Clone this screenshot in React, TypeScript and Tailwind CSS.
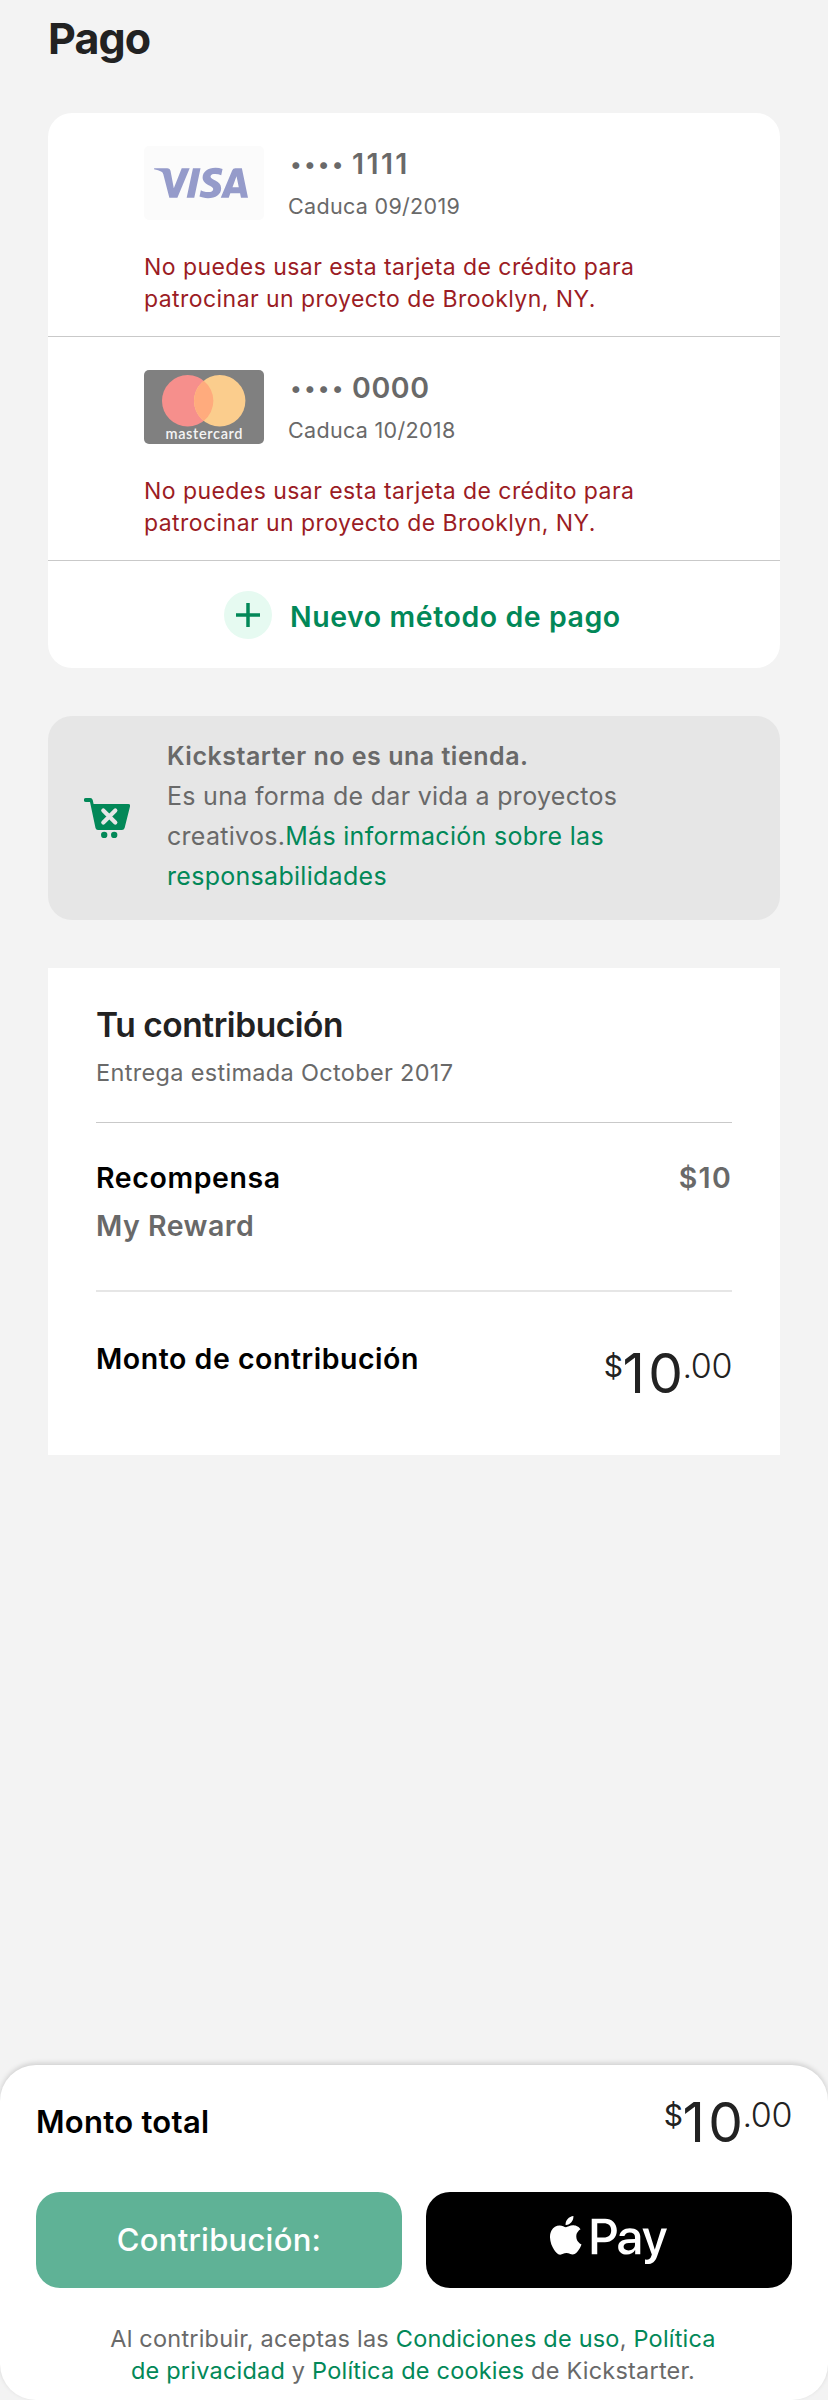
import type { ReactNode } from "react";
import { FaApplePay } from "react-icons/fa";
import { SiVisa } from "react-icons/si";

function VisaLogo() {
  return (
    <div className="flex h-[74px] w-[120px] shrink-0 items-center justify-center rounded-[5px] bg-[#fbfbfb]">
      <SiVisa className="size-[94px] -translate-x-[3px] text-[#959bca]" />
    </div>
  );
}

function MastercardLogo() {
  return (
    <svg viewBox="0 0 120 74" className="h-[74px] w-[120px] shrink-0">
      <rect width="120" height="74" rx="5" fill="#808080" />
      <circle cx="43.7" cy="30.8" r="25.7" fill="#f68f8c" />
      <circle cx="75.7" cy="30.8" r="25.7" fill="#fbcd8d" />
      <path d="M59.7 10.7a25.7 25.7 0 0 1 0 40.2a25.7 25.7 0 0 1 0-40.2z" fill="#ffab7d" />
      <text
        x="21.5"
        y="69"
        textLength="77"
        lengthAdjust="spacing"
        fill="#f4f4f4"
        fontFamily="Lato, sans-serif"
        fontWeight="600"
        fontSize="14.5"
      >
        mastercard
      </text>
    </svg>
  );
}

function CardRow({ logo, digits, expiry }: { logo: ReactNode; digits: ReactNode; expiry: string }) {
  return (
    <div className="h-[224px] border-b border-[#c9c9c9] pt-[33px] pl-24">
      <div className="flex">
        {logo}
        <div className="pl-6 text-[#696969]">
          <div className="mt-px flex h-[34px] items-baseline pl-[2px] text-[28.5px] leading-[34px] font-semibold">
            <span className="w-[60px] -translate-y-[2px] text-[22px] font-medium tracking-[2.2px]">••••</span>
            {digits}
          </div>
          <div className="mt-[11px] text-[21.5px] leading-7 tracking-[0.32px]">{expiry}</div>
        </div>
      </div>
      <p className="mt-[31px] text-[23px] leading-8 tracking-[0.44px] text-[#9b1c24]">
        No puedes usar esta tarjeta de crédito para
        <br />
        patrocinar un proyecto de Brooklyn, NY.
      </p>
    </div>
  );
}

function CartIcon() {
  return (
    <svg viewBox="0 0 46 40" className="h-10 w-[46px] shrink-0" fill="#028858">
      <path d="M1.8 0H6.3Q8.2 0 8.7 2L9.6 6H44.2Q46.6 6 46 8.4L40.6 30Q40 32 38 32H14Q12 32 11.5 30L6 4H1.8A2 2 0 0 1 1.8 0Z" />
      <circle cx="20.2" cy="37" r="3.2" />
      <circle cx="30.2" cy="37" r="3.2" />
      <path d="M19.3 12.6 31.3 24.6M31.3 12.6 19.3 24.6" stroke="#e6e6e6" strokeWidth="4.2" strokeLinecap="round" />
    </svg>
  );
}

function Amount() {
  return (
    <div className="flex text-[#222222]">
      <span className="text-[30px] leading-[43px] tracking-[-0.5px]">$</span>
      <span className="-mr-[3.6px] text-[55px] leading-[56px] tracking-[3.2px]">10</span>
      <span className="text-[34px] leading-[42px] font-[350] tracking-[-0.4px]">.00</span>
    </div>
  );
}

export default function App() {
  return (
    <div className="flex h-[2400px] w-[828px] flex-col bg-[#f3f3f3] font-[Inter,sans-serif]">
      <main className="grow px-12 pt-3">
        <h1 className="text-[43px] leading-[52px] font-bold tracking-[-0.9px] text-[#222222]">Pago</h1>

        <section className="mt-[49px] h-[555px] overflow-hidden rounded-3xl bg-white">
          <CardRow
            logo={<VisaLogo />}
            digits={<span className="pl-[2px] tracking-[2.4px]">1111</span>}
            expiry="Caduca 09/2019"
          />
          <CardRow
            logo={<MastercardLogo />}
            digits={<span className="pl-[2px] tracking-[0.6px]">0000</span>}
            expiry="Caduca 10/2018"
          />
          <div className="flex h-[107px] items-center pl-44">
            <svg viewBox="0 0 48 48" className="size-12">
              <circle cx="24" cy="24" r="24" fill="#e6faf1" />
              <path d="M24 12v24M12 24h24" stroke="#028858" strokeWidth="3.5" />
            </svg>
            <span className="mt-1 ml-[18px] text-[28.5px] leading-10 font-semibold tracking-[0.56px] text-[#028858]">
              Nuevo método de pago
            </span>
          </div>
        </section>

        <section className="mt-12 flex h-[204px] items-center rounded-3xl bg-[#e6e6e6] pl-9">
          <CartIcon />
          <p className="-mt-1 ml-[37px] text-[25px] leading-10 tracking-[0.29px] text-[#696969]">
            <span className="font-semibold tracking-[0.52px]">Kickstarter no es una tienda.</span>
            <br />
            Es una forma de dar vida a proyectos
            <br />
            creativos.
            <span className="text-[#028858]">
              Más información sobre las
              <br />
              responsabilidades
            </span>
          </p>
        </section>

        <section className="mt-12 h-[487px] bg-white px-12 pt-[37px]">
          <h2 className="text-[33.5px] leading-10 font-semibold tracking-[-0.45px] text-[#222222]">Tu contribución</h2>
          <p className="mt-3 text-[23.5px] leading-8 tracking-[0.32px] text-[#696969]">
            Entrega estimada October 2017
          </p>
          <div className="mt-[33px] h-px bg-[#c9c9c9]" />
          <div className="mt-[35px] flex justify-between text-[28.5px] leading-10">
            <span className="font-semibold tracking-[0.6px] text-black">Recompensa</span>
            <span className="font-semibold tracking-[1.3px] text-[#696969]">$10</span>
          </div>
          <p className="mt-2 text-[28.5px] leading-10 font-semibold tracking-[0.5px] text-[#696969]">My Reward</p>
          <div className="mt-11 h-[2px] bg-[#e6e6e6]" />
          <div className="flex justify-between">
            <span className="mt-[47px] text-[28.5px] leading-10 font-semibold tracking-[0.53px] text-black">
              Monto de contribución
            </span>
            <div className="mt-[53px]">
              <Amount />
            </div>
          </div>
        </section>
      </main>

      <footer className="h-[335px] shrink-0 rounded-[36px] bg-white px-9 pt-[29px] shadow-[0_-2px_5px_rgba(0,0,0,0.15)]">
        <div className="flex h-[56px] justify-between">
          <span className="mt-2 text-[31px] leading-10 font-semibold tracking-[0.28px] text-black">Monto total</span>
          <Amount />
        </div>
        <div className="mt-[42px] flex h-24 gap-6">
          <button className="flex-1 rounded-3xl bg-[#5fb296] text-[31px] font-[550] tracking-[0.25px] text-white">
            Contribución:
          </button>
          <button className="flex flex-1 items-center justify-center rounded-3xl bg-black">
            <FaApplePay className="h-[94px] w-[117px] -translate-x-px text-white" />
          </button>
        </div>
        <p className="mt-[35px] -ml-[2px] text-center text-[23.5px] leading-8 tracking-[0.21px] text-[#696969]">
          Al contribuir, aceptas las <span className="text-[#028858]">Condiciones de uso</span>,{" "}
          <span className="text-[#028858]">Política</span>
          <br />
          <span className="text-[#028858]">de privacidad</span> y{" "}
          <span className="text-[#028858]">Política de cookies</span> de Kickstarter.
        </p>
      </footer>
    </div>
  );
}
